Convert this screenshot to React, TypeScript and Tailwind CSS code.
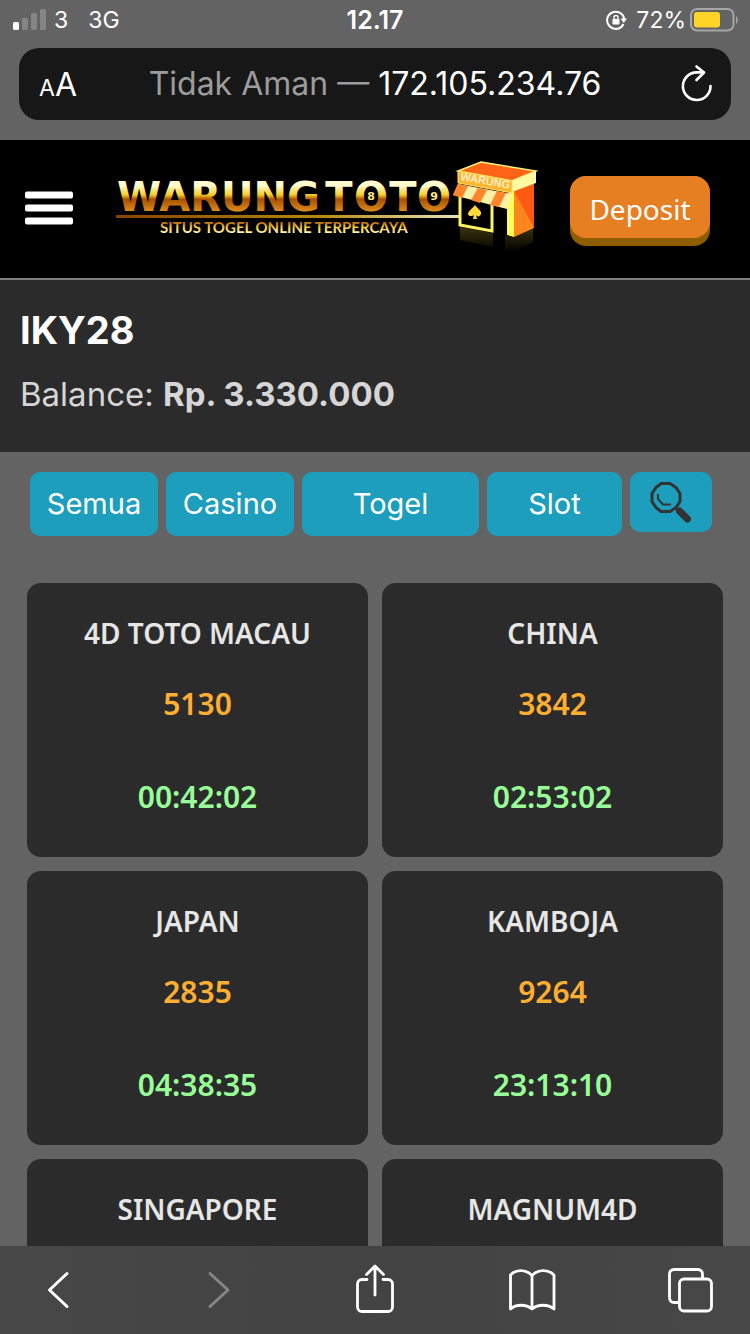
import { useState } from "react";

interface Market {
  name: string;
  result?: string;
  countdown?: string;
}

const MARKETS: Market[] = [
  { name: "4D TOTO MACAU", result: "5130", countdown: "00:42:02" },
  { name: "CHINA", result: "3842", countdown: "02:53:02" },
  { name: "JAPAN", result: "2835", countdown: "04:38:35" },
  { name: "KAMBOJA", result: "9264", countdown: "23:13:10" },
  { name: "SINGAPORE" },
  { name: "MAGNUM4D" },
];

const FILTERS = ["Semua", "Casino", "Togel", "Slot"];

function StatusBar() {
  return (
    <div className="grid h-10 grid-cols-3 items-center px-3 text-[23px] leading-7 text-white">
      <div className="flex items-center">
        <svg width="34" height="22" viewBox="0 0 34 22" aria-hidden="true">
          <rect x="1" y="13" width="6" height="8" rx="1.5" fill="#fff" />
          <g fill="#858585">
            <rect x="10" y="9" width="6" height="12" rx="1.5" />
            <rect x="19" y="4" width="6" height="17" rx="1.5" />
            <rect x="28" y="0" width="6" height="21" rx="1.5" />
          </g>
        </svg>
        <span className="ml-2">3</span>
        <span className="ml-5">3G</span>
      </div>
      <div className="text-center text-[25px] font-semibold">12.17</div>
      <div className="flex items-center justify-end">
        <svg width="22" height="20" viewBox="0 0 22 20" fill="none" aria-hidden="true">
          <path d="M17.5 14A8.6 8.6 0 1 1 18.2 9" stroke="#fff" strokeWidth="2" />
          <path d="M14.5 8.5h6.5l-3.2 4.6z" fill="#fff" />
          <rect x="6.5" y="9" width="7" height="5.5" rx="0.8" fill="#fff" />
          <path d="M8 9V7.5a2 2 0 0 1 4 0V9" stroke="#fff" strokeWidth="1.3" />
        </svg>
        <span className="ml-2">72%</span>
        <svg className="ml-1" width="48" height="24" viewBox="0 0 48 24" fill="none" aria-hidden="true">
          <rect x="1" y="1" width="42.500" height="21.500" rx="6" stroke="#a6a6a6" strokeWidth="2" />
          <rect x="4" y="4" width="26" height="15.500" rx="3" fill="#ffd426" />
          <path d="M46 8c2.300 1.500 2.300 6.500 0 8z" fill="#a6a6a6" />
        </svg>
      </div>
    </div>
  );
}

function AddressBar() {
  return (
    <div className="mx-[19px] mt-2 mb-5 flex h-[72px] items-center justify-between rounded-[20px] bg-[#171717] px-4 text-white">
      <button aria-label="Text size" className="flex w-12 items-baseline pt-1 pl-1">
        <span className="text-[23px] leading-9">A</span>
        <span className="text-[32px] leading-9">A</span>
      </button>
      <div className="text-[32px] leading-10">
        <span className="text-[#9c9c9c]">Tidak Aman — </span>172.105.234.76
      </div>
      <button aria-label="Reload" className="flex w-12 justify-end">
        <svg width="36" height="40" viewBox="0 0 36 40" fill="none" stroke="#fff" strokeWidth="2.600" strokeLinecap="round" strokeLinejoin="round">
          <path d="M31.500 22a13.800 13.800 0 1 1-13.800-13.600h7" />
          <path d="M17.500 2.500l7.500 6-7.500 7.500" />
        </svg>
      </button>
    </div>
  );
}

function Logo() {
  return (
    <svg width="424" height="100" viewBox="0 0 424 100" role="img" aria-label="Warungtoto" className="shrink-0">
      <defs>
        <linearGradient id="gold" x1="0" y1="0" x2="0" y2="1" gradientUnits="objectBoundingBox">
          <stop offset="0.250" stopColor="#fffbd0" />
          <stop offset="0.450" stopColor="#f5cf2c" />
          <stop offset="0.550" stopColor="#a95000" />
          <stop offset="0.800" stopColor="#d98a1c" />
        </linearGradient>
        <linearGradient id="rule" x1="0" y1="0" x2="1" y2="0">
          <stop offset="0" stopColor="#8a4200" />
          <stop offset="0.600" stopColor="#b58a10" />
          <stop offset="1" stopColor="#e9e3bd" />
        </linearGradient>
        <linearGradient id="tag" x1="0" y1="0" x2="0" y2="1">
          <stop offset="0.300" stopColor="#c47b10" />
          <stop offset="0.500" stopColor="#eec93c" />
          <stop offset="0.800" stopColor="#fff4a8" />
        </linearGradient>
        <linearGradient id="shade" x1="0" y1="0" x2="0" y2="1">
          <stop offset="0" stopColor="#3d330d" />
          <stop offset="1" stopColor="#000" />
        </linearGradient>
      </defs>
      <text y="52" fontFamily="'DejaVu Sans', sans-serif" fontWeight="700" fontSize="40" fill="url(#gold)">
        <tspan x="1">WARUNG</tspan>
        <tspan x="223" textAnchor="middle">T</tspan>
        <tspan x="255" textAnchor="middle">O</tspan>
        <tspan x="287" textAnchor="middle">T</tspan>
        <tspan x="318" textAnchor="middle">O</tspan>
      </text>
      <g fontFamily="'DejaVu Sans', sans-serif" fontWeight="700" fontSize="11" fill="#ffe680" textAnchor="middle">
        <text x="255" y="41">8</text>
        <text x="318" y="41">9</text>
      </g>
      <rect x="0" y="56" width="344" height="3" fill="url(#rule)" />
      <text x="44" y="74" fontFamily="Lato, sans-serif" fontWeight="700" fontSize="15" fill="url(#tag)">
        SITUS TOGEL ONLINE TERPERCAYA
      </text>
      {/* shop */}
      <path d="M344 68l33 6v14l-33-7zM389 76l7 2 21-9v14l-21 10-7-2z" fill="url(#shade)" />
      <path d="M344 36l32 6v30l-32-6z" fill="#000" stroke="#fff263" strokeWidth="3" />
      <path d="M359 46c3 4 7 6 6 9-1 3-4 3-5 1l1 4h-4l1-4c-2 2-6 1-6-1 0-3 4-5 7-9z" fill="#ffd83c" />
      <path d="M391 37l7-12v53l-7-2z" fill="#ffff55" />
      <path d="M398 32l20-9v46l-20 9z" fill="#ff861c" />
      <path d="M398 32l20-9v46z" fill="#ff5a12" />
      <path d="M342 12l23-9 55 9-24 10z" fill="#ff6417" stroke="#fff27c" strokeWidth="1.500" />
      <path d="M396 22l24-10v12l-24 9z" fill="#fff9a0" />
      <path d="M342 12l54 10v12l-54-10z" fill="#ffb62c" stroke="#ffe06a" />
      <text transform="translate(344 21) rotate(10)" fontFamily="'Liberation Sans', sans-serif" fontSize="11" fontWeight="700" fill="#ffeec8">
        WARUNG
      </text>
      <path d="M342 25l54 10-5 15-54-14z" fill="#fff0a8" />
      <path d="M342 25l10 2-6 12-9-3zM362 29l9 2-7 13-9-3zM381 32l9 2-7 14-9-2z" fill="#ff8528" />
    </svg>
  );
}

function SiteHeader() {
  return (
    <header className="flex h-[140px] items-center justify-between border-b-2 border-[#808080] bg-black pr-10 pl-6">
      <button aria-label="Menu" className="shrink-0">
        <svg width="50" height="36" viewBox="0 0 50 36" fill="#fff">
          <rect x="1" y="0.500" width="48" height="7" rx="2" />
          <rect x="1" y="13.500" width="48" height="7" rx="2" />
          <rect x="1" y="26.500" width="48" height="7" rx="2" />
        </svg>
      </button>
      <a href="#home" className="ml-3">
        <Logo />
      </a>
      <button className="mt-1 h-[70px] w-[140px] shrink-0 rounded-2xl border-b-8 border-[#8f5d00] bg-[#8f5d00] font-['Noto_Sans',sans-serif] text-[28px] text-white">
        <span className="flex h-full items-center justify-center rounded-2xl bg-[#e67e22] pt-1">Deposit</span>
      </button>
    </header>
  );
}

function MarketCard({ market }: { market: Market }) {
  return (
    <article className="min-h-[274px] rounded-[14px] bg-[#2b2b2b] pt-8 text-center font-['Noto_Sans',sans-serif] text-[30px] leading-9 font-semibold">
      <h2 className="text-[28px] leading-9 text-[#e6e6e6]">{market.name}</h2>
      {market.result && <p className="mt-[35px] text-[#ffae34]">{market.result}</p>}
      {market.countdown && <p className="mt-[57px] text-[#98ff98]">{market.countdown}</p>}
    </article>
  );
}

function SearchIcon() {
  return (
    <svg width="42" height="42" viewBox="0 0 42 42" fill="none" stroke="#333" aria-hidden="true">
      <path d="M11 2.500h9l6 4 4 6v8l-4 6-6 4h-9l-5-4-4-6v-8l4-6z" strokeWidth="3" />
      <path d="M8 13v5l5 5.500h8" strokeWidth="2" />
      <path d="M26 27l3 3" strokeWidth="3" />
      <path d="M29.500 30l8 8" strokeWidth="7" strokeLinecap="round" />
    </svg>
  );
}

function Toolbar() {
  const button = "flex h-14 w-12 items-center justify-center";
  return (
    <nav className="flex h-[88px] shrink-0 items-center justify-between bg-linear-to-r from-[#474747] via-[#434343] to-[#474747] pr-9 pl-[34px] text-white">
      <button aria-label="Back" className={button}>
        <svg width="48" height="48" viewBox="0 0 48 48" fill="none" stroke="currentColor" strokeWidth="3" strokeLinecap="round" strokeLinejoin="round">
          <path d="M33 7.500L15.500 24 33 40.500" />
        </svg>
      </button>
      <button aria-label="Forward" disabled className={`${button} text-[#868686]`}>
        <svg width="48" height="48" viewBox="0 0 48 48" fill="none" stroke="currentColor" strokeWidth="3" strokeLinecap="round" strokeLinejoin="round">
          <path d="M18 7.500L36 24 18 40.500" />
        </svg>
      </button>
      <button aria-label="Share" className={button}>
        <svg width="48" height="52" viewBox="0 0 48 52" fill="none" stroke="currentColor" strokeWidth="2.800" strokeLinecap="round" strokeLinejoin="round">
          <path d="M17 15.500h-5a4.500 4.500 0 0 0-4.500 4.500v23a4.500 4.500 0 0 0 4.500 4.500h26a4.500 4.500 0 0 0 4.500-4.500V20a4.500 4.500 0 0 0-4.500-4.500h-5" />
          <path d="M25 31V2.500M16.500 10.500L25 2l8.500 8.500" />
        </svg>
      </button>
      <button aria-label="Bookmarks" className={button}>
        <svg width="48" height="48" viewBox="0 0 48 48" fill="none" stroke="currentColor" strokeWidth="2.800" strokeLinejoin="round">
          <path d="M24 9.500C18 3 8 3 2.500 9v34C8 38 18 38 24 43c6-5 16-5 22 0V9C40 3 30 3 24 9.500zM24 9.500V43" />
        </svg>
      </button>
      <button aria-label="Tabs" className={button}>
        <svg width="48" height="48" viewBox="0 0 48 48" fill="none" stroke="currentColor" strokeWidth="2.800">
          <path d="M13 36.500H8A4.500 4.500 0 0 1 3.500 32V8A4.500 4.500 0 0 1 8 3.500h24A4.500 4.500 0 0 1 36.500 8v5" />
          <rect x="13.500" y="13" width="32" height="32" rx="4.500" />
        </svg>
      </button>
    </nav>
  );
}

export default function App() {
  const [filter, setFilter] = useState("Semua");

  return (
    <div className="flex h-screen flex-col overflow-hidden bg-[#636363] font-[Inter,sans-serif]">
      <StatusBar />
      <AddressBar />
      <SiteHeader />
      <section className="bg-[#2b2b2b] px-5 pt-6 pb-8">
        <h1 className="text-[38px] leading-[52px] font-bold text-white">IKY28</h1>
        <p className="pt-[14px] pb-[2px] text-[33px] leading-[48px] text-[#d6d6d6]">
          Balance: <strong>Rp. 3.330.000</strong>
        </p>
      </section>
      <main className="min-h-0 flex-1 overflow-y-auto [scrollbar-width:none]">
        <div className="grid grid-cols-[128fr_128fr_177fr_135fr_82fr] items-start gap-2 pt-5 pr-[38px] pl-[30px]">
          {FILTERS.map((f) => (
            <button
              key={f}
              onClick={() => setFilter(f)}
              aria-pressed={filter === f}
              className="h-16 rounded-[10px] bg-[#1e9ebd] text-[29px] text-white"
            >
              {f}
            </button>
          ))}
          <button aria-label="Search" className="flex h-[60px] items-center justify-center rounded-[10px] bg-[#1e9ebd]">
            <SearchIcon />
          </button>
        </div>
        <div className="grid grid-cols-2 gap-[14px] px-[27px] pt-[47px] pb-4">
          {MARKETS.map((m) => (
            <MarketCard key={m.name} market={m} />
          ))}
        </div>
      </main>
      <Toolbar />
    </div>
  );
}
